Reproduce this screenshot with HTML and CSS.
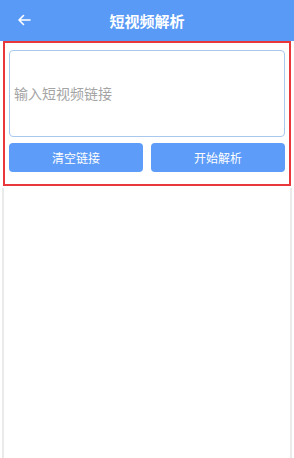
FILE: index.html
```html
<!DOCTYPE html>
<html lang="zh-CN">
<head>
    <meta charset="UTF-8">
    <meta name="viewport" content="width=device-width, initial-scale=1.0">
    <title>短视频解析</title>
    <link rel="stylesheet" href="styles.css">
</head>
<body>

    <!-- Header -->
    <div class="header">
        <span class="back">
            <svg width="14" height="12" viewBox="0 0 14 12">
                <path d="M13 6H2M6.5 1.5L2 6l4.5 4.5" fill="none" stroke="#fff" stroke-width="1.6" stroke-linecap="round" stroke-linejoin="round"/>
            </svg>
        </span>
        <h1>短视频解析</h1>
    </div>

    <!-- Input area -->
    <div class="panel">
        <textarea class="link-input" placeholder="输入短视频链接"></textarea>
        <div class="actions">
            <button class="btn">清空链接</button>
            <button class="btn">开始解析</button>
        </div>
    </div>

    <!-- Result area -->
    <div class="result"></div>

</body>
</html>
```

FILE: styles.css
```css
body {
    font-family: "Noto Sans CJK SC", "Noto Sans", sans-serif;
    background-color: #fff;
    margin: 0;
    padding: 0;
    height: 458px;
    display: flex;
    flex-direction: column;
}

.header {
    height: 41px;
    background-color: #5a9af7;
    display: flex;
    align-items: center;
    justify-content: center;
    position: relative;
    flex-shrink: 0;
}

.header h1 {
    margin: 0;
    color: #fff;
    font-size: 15px;
    font-weight: bold;
}

.back {
    position: absolute;
    left: 17px;
    top: 14px;
    display: flex;
}

.panel {
    margin: 0 3px;
    border: 2px solid #e8383b;
    padding: 7px 4px 12px 4px;
    display: flex;
    flex-direction: column;
    gap: 6px;
}

.link-input {
    height: 87px;
    box-sizing: border-box;
    border: 1px solid #a9c8ee;
    border-radius: 4px;
    padding: 0 4px;
    font-family: inherit;
    font-size: 14px;
    resize: none;
    outline: none;
    line-height: 85px;
}

.link-input::placeholder {
    color: #a4a4a4;
}

.actions {
    display: flex;
    gap: 8px;
}

.btn {
    flex: 1;
    height: 29px;
    background-color: #5d9cf8;
    color: #fff;
    border: none;
    border-radius: 4px;
    font-family: inherit;
    font-size: 12px;
    cursor: pointer;
}

.result {
    flex: 1;
    margin: 2px 2px 0 2px;
    border-left: 2px solid #eaeaea;
    border-right: 2px solid #eaeaea;
}
```
